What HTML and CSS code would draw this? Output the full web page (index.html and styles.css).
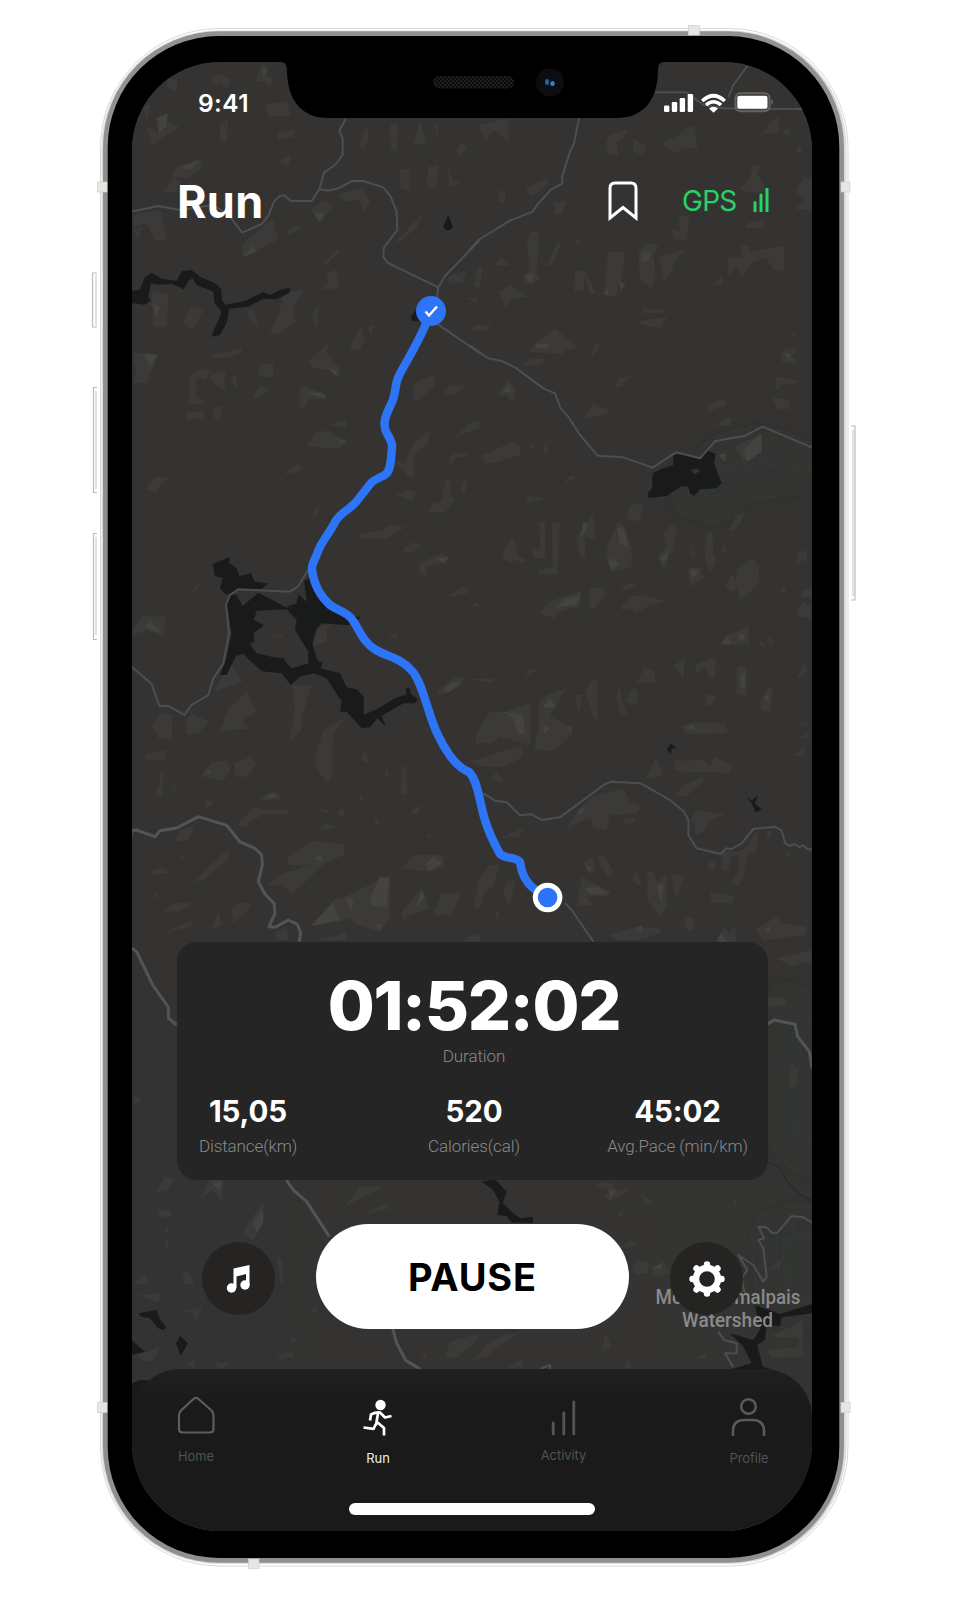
FILE: index.html
```html
<!DOCTYPE html>
<html lang="en">
<head>
<meta charset="utf-8">
<title>Run</title>
<link rel="stylesheet" href="styles.css">
</head>
<body>
<main class="stage">
  <svg class="frame" viewBox="0 0 956 1600" aria-hidden="true">
    <defs>
      <linearGradient id="rim" x1="0" x2="0" y1="0" y2="1"><stop offset="0" stop-color="#8f9193"/><stop offset="1" stop-color="#8f8f92"/></linearGradient>
    </defs>
    <g fill="#fdfdfd" stroke="#bcbcbc" stroke-width="1.2">
      <path d="M97 273h-4.500v54H97M97 387.500h-3.500v105H97M97 533.500h-3.500v106H97"/>
      <path d="M851 426h4v174h-4"/>
    </g>
    <path d="M96 275v50M96 391v98M96 537v98M853 430v166" stroke="#c6c6c6" stroke-width="1"/>
    <rect x="100.500" y="28.500" width="747.500" height="1537.500" rx="119" fill="#fff" stroke="#d8dada"/>
    <rect x="101.500" y="30.500" width="745" height="1533.500" rx="117" fill="#dcdede"/>
    <rect x="103" y="31.300" width="741" height="1531.500" rx="116" fill="url(#rim)"/>
    <rect x="107.700" y="36" width="731.600" height="1522" rx="111" fill="#000"/>
    <g fill="#e6e7e1" stroke="#cfd0ca" stroke-width=".7">
      <rect x="97.500" y="182" width="9.500" height="10"/><rect x="841" y="182" width="9" height="10"/>
      <rect x="97.500" y="1402.500" width="9.500" height="10"/><rect x="841" y="1402.500" width="9" height="10"/>
      <rect x="688.500" y="25.500" width="11" height="9.500"/><rect x="248.500" y="1559" width="10.500" height="9.500"/>
    </g>
  </svg>

  <section class="screen">
    <svg class="map" viewBox="132 62 680 1469" aria-hidden="true">
      <defs>
        <pattern id="mesh" width="4" height="4" patternUnits="userSpaceOnUse"><rect width="4" height="4" fill="#0b0b0b"/><circle cx="1" cy="1" r="1" fill="#242424"/><circle cx="3" cy="3" r="1" fill="#242424"/></pattern>
        <linearGradient id="cool" x1="0" x2="1"><stop offset="0" stop-color="#333334"/><stop offset=".55" stop-color="#353331"/><stop offset="1" stop-color="#333432"/></linearGradient>
        <linearGradient id="fade" x1="0" x2="0" y1="0" y2="1"><stop offset="0" stop-color="#fff" stop-opacity="0"/><stop offset="1" stop-color="#fff"/></linearGradient>
        <mask id="low"><rect x="132" y="940" width="680" height="200" fill="url(#fade)"/><rect x="132" y="1139" width="680" height="400" fill="#fff"/></mask>
        <filter id="soft" x="-30%" y="-30%" width="160%" height="160%"><feGaussianBlur stdDeviation="10"/></filter>
      </defs>
      <rect x="132" y="62" width="680" height="1469" fill="#353331"/>
      <rect x="132" y="940" width="680" height="591" fill="url(#cool)" mask="url(#low)"/>
      <g fill="#303430" filter="url(#soft)">
        <path d="M715 450L762 438L812 458V478L740 488L720 512L680 500Z"/>
        <path d="M780 990L812 1010V1170L782 1140Z"/>
        <path d="M765 1225L812 1215V1320L770 1310Z"/>
      </g>

      <!-- terrain facets -->
      <g class="facets">
        <g transform="translate(80 10) scale(.33333)">
          <path d="M388 208L415 192L454 208L440 236L422 220L405 228ZM530 200L545 160L565 172L560 195L582 208L570 230L548 215L528 212ZM556 282L620 275L632 315L565 322ZM260 205L292 210L290 245L262 232ZM190 290L212 280L200 330ZM225 325L265 310L262 335L298 350L215 405L200 350L235 370ZM418 340L444 330L442 395L422 398ZM592 370L640 358L642 380L595 390ZM590 458L635 432L625 468ZM290 470L360 448L368 470L325 505L275 500ZM245 550L280 505L300 510L290 545ZM835 410L862 345L868 380L850 420ZM930 345L955 340L950 425L932 415ZM1000 405L1020 330L1040 402ZM1062 340L1074 340L1072 390ZM1130 420L1145 395L1162 410L1140 440ZM960 480L990 478L988 545L962 535ZM1045 470L1075 465L1070 535L1040 530ZM1104 465L1118 510L1142 520L1108 530ZM690 600L735 570L762 588L720 635ZM770 555L850 530L870 575L850 605L840 570L800 575ZM160 612L240 600L262 692L222 690L200 640L160 650ZM490 700L580 625L592 690L485 745ZM620 660L655 645L662 655L628 675ZM935 710L1000 640L1032 605L1010 655ZM730 755L778 715L775 730L735 765ZM740 790L772 778L775 835L720 840L745 820ZM215 840L265 855L260 950L220 950ZM330 890L370 900L340 960L310 940ZM610 850L675 840L640 890L645 935L590 975L570 970L600 900ZM500 910L520 895L540 960L510 930ZM695 910L718 885L708 960ZM820 985L845 945L855 985L840 1020H810ZM860 950L882 945L875 980ZM1105 800L1160 780L1150 815L1105 822ZM1160 865L1195 860L1190 880ZM160 660L185 650L175 690Z"/>
          <path class="hi" d="M235 322L262 312L258 350L238 370ZM300 470L360 450L330 480ZM490 740L520 705L530 725ZM545 172L562 180L550 200ZM700 610L735 610L720 635ZM215 880L240 890L230 920Z"/>
        </g>
        <g transform="translate(470 10) scale(.33333)">
          <path d="M25 345L115 325V400L75 360L45 390ZM408 400L420 375L475 358L460 385L440 400L445 435L410 435ZM490 385L528 410L520 435L488 425ZM575 400L628 375L655 350H670L684 415L640 412L615 432ZM870 375L925 315V365ZM935 365L960 350L955 378ZM975 425L988 402L998 428ZM85 545L105 540V575L88 580ZM165 535L230 505L235 520L185 560ZM252 580L290 570L275 615L255 610ZM180 665L208 662L200 790L210 810L165 825L160 800L180 780L170 700ZM228 770L262 695L275 700L245 765ZM312 680L335 700H315ZM415 725L465 725L455 810L435 860L400 855ZM505 725L530 700L565 705L550 740L558 800L545 835L510 810ZM568 740L655 715L615 750L605 790L580 815ZM600 650L630 665L625 620L658 615L650 690L615 688ZM315 785L345 780L378 850L360 852L345 800L340 840L312 845ZM88 845L120 825L175 860L130 865L105 892ZM12 830L25 772H38L30 832ZM75 765L95 740L120 768ZM840 500L850 465L875 468L860 490L890 540L860 550L810 540ZM975 540L1005 500L1025 505V600L975 598L1000 570ZM830 640L885 628L880 655H825ZM775 745L815 740V705L840 708V725L942 708V785L910 780L890 745L845 758L820 800L795 770L775 800ZM730 830L755 795L760 820ZM10 945H60L55 962H10ZM200 1000L255 955L320 1010L300 1020H200ZM500 935L590 920L575 955L520 945ZM515 895L590 900L580 910H520ZM955 975L975 965V978Z"/>
          <path class="hi" d="M515 730L545 725L535 752L512 755ZM450 815L468 825L450 840ZM400 850L418 835L412 858ZM165 800L190 790L185 820Z"/>
        </g>
        <g transform="translate(80 340) scale(.33333)">
          <path d="M160 38L235 42L200 130H160L170 90L160 70ZM395 45L485 25V38L440 55L395 55ZM535 75L580 70V110L540 112ZM330 110L350 88L392 90L375 120L350 110L345 165L378 190L325 195ZM395 100L440 95L430 125L438 155L390 120ZM450 110L470 108V148ZM515 180L540 135L572 150ZM318 218L372 212L374 235L318 240ZM402 200L425 198L420 244L402 235ZM662 135L740 165L740 178L690 175L672 205L660 200ZM685 65L745 10L740 40L780 85L772 115L750 90L700 85ZM680 318L710 272L755 275L802 305L775 328ZM750 255L798 240V262ZM610 402L655 372L668 385L640 400ZM195 445L225 412L270 410L240 440L225 460ZM697 525L708 502L720 505L708 530ZM835 580L905 572L925 555L975 562L925 595L838 597ZM960 638L990 608L1030 612L1000 635ZM1015 672L1085 640L1112 655L1070 675L1040 680V705L1020 702ZM985 410L940 360L975 370L1000 310L1050 268L1045 310L1000 350L1005 410ZM1000 130L1065 105L1062 140L1025 175L1000 185ZM1088 160L1112 135L1160 138L1120 165ZM1125 290L1170 250L1200 240V265ZM1045 515L1060 490L1085 485L1095 420L1112 415L1110 465L1125 480L1095 518ZM1142 455L1148 425L1162 420L1155 460ZM948 465L985 448L1008 455L1000 482ZM1105 360L1122 340H1162L1158 352H1128L1112 378ZM1100 772L1150 740L1168 758ZM700 915L715 862L770 850L740 865V905ZM158 870L185 828L255 830L252 888L200 870L160 885ZM400 1055L450 970L488 1025L430 1045ZM445 1105L500 1055L530 1115L485 1145L510 1165L420 1175ZM215 1155L245 1115L278 1125L275 1200L235 1195ZM315 1150L335 1120L388 1145L355 1180L320 1185ZM635 1035H695L665 1135V1170L630 1205L645 1100ZM705 1255L730 1170L800 1130L760 1180L755 1255ZM1068 1060L1120 1015L1155 1010L1140 1040L1080 1068ZM200 1240L260 1245L255 1260H195ZM920 885L955 880L950 895ZM572 892L605 882L608 892ZM335 760L350 730L355 745Z"/>
          <path class="hi" d="M190 42L232 45L212 80ZM685 160L725 158L742 178ZM190 860L215 845L245 880ZM1070 655L1108 652L1090 670ZM1090 1048L1120 1025L1140 1030L1105 1058ZM770 298L800 302L785 312ZM745 85L770 90V110Z"/>
        </g>
        <g transform="translate(470 340) scale(.33333)">
          <path d="M178 35L200 5H298L280 42ZM160 80L180 55L228 58L215 72ZM360 60L375 10L390 15ZM80 165L115 120L138 150L128 188L108 165ZM435 142L445 115L485 108L465 125L455 142ZM342 238L368 190L415 208L412 222ZM930 50L945 25L980 28L965 48L988 70H940ZM920 110L985 120V130L935 135L915 155ZM902 172L958 180L955 208H925ZM712 200L745 180L772 182L765 198L712 214ZM742 255L775 232L788 238L778 258ZM38 345L130 305L150 315V345L75 370H42ZM175 310L190 315V332ZM218 340L228 292L234 342ZM280 435L300 408L320 412ZM165 490L175 468L228 478ZM470 515L485 492L520 495L510 542H475ZM97 635L130 590L145 650L170 660L160 668L130 660L118 668L98 650ZM208 545H225V655L190 655L185 622L210 630ZM245 550L270 545L262 700L208 705L205 690L248 682ZM318 590L345 560L370 518L375 600L345 590V655L328 650ZM410 620L445 545L465 560L485 630V680L425 695L408 650ZM565 650L590 620L580 575L605 555L620 565L610 630L592 655L585 695ZM655 685L690 680L700 715L658 740ZM708 580H728L730 645L742 660L720 698L705 660ZM665 600L675 645L665 650ZM755 635L762 610L770 635ZM775 570L800 525L822 518L815 545L790 570ZM765 740L790 700L798 730L800 690L850 655L868 680L865 735L810 780L800 745L785 755ZM975 670L985 635L1010 632L1012 660ZM930 765L938 738L950 752ZM980 810L1000 785L1022 800V835L990 830ZM990 770L1000 750L1025 745V775ZM210 820L235 785L335 752L330 800L280 810L250 835ZM358 745L405 742L402 770L368 810L358 805ZM452 800L485 768L545 770L588 785L540 795L500 818L480 805L455 810ZM448 755L475 728L500 738ZM750 912L770 885L800 875L835 855L838 915ZM862 892L890 920H875ZM895 885L910 902L900 915ZM500 1028L525 978L555 995V1028ZM612 978L645 950L640 1018ZM675 975L738 950L735 1018L715 1010L705 980L680 1000ZM800 980H830V1068L800 1060ZM978 1020L1005 965L1012 995ZM870 1085L900 1035L908 1060L900 1115L875 1110ZM18 1180L60 1115H105L180 1090V1215L90 1190L65 1210H18ZM205 1085L232 1065L290 1045L270 1075L240 1130L308 1160L305 1185L250 1232L192 1228L205 1170ZM345 1055L365 1020H382V1150L365 1115ZM315 1065H338L325 1130ZM450 1040L455 1075L472 1128L452 1120L438 1075ZM470 1085L485 1045L502 1048V1095ZM632 1160L665 1148H762L775 1180L650 1182ZM705 1062L740 1070L725 1095H708ZM165 1010L175 988L202 990ZM0 1018L72 1015L68 1028ZM980 1160L1000 1145L1012 1150ZM985 1195L1015 1180V1195ZM0 275L8 245L25 248ZM0 800L20 785L28 800ZM820 360L795 320L860 290L875 340Z"/>
          <path class="hi" d="M200 12L235 10V25L195 25ZM98 155L118 135L125 158ZM940 40L962 42L958 62ZM340 545L355 550L345 575L330 595ZM440 565L460 560L475 625L450 610ZM412 665L430 655L448 672L425 692ZM570 655L595 635L590 660L575 668ZM660 690L685 688L680 705L665 715ZM255 800L290 775L332 765L320 795L270 802ZM755 912L770 890L785 912ZM800 880L828 885L815 905ZM812 1000H825V1045L810 1040ZM880 1070L895 1060L895 1085ZM100 1115L160 1125L165 1180L145 1185L130 1135ZM220 1100L240 1072L258 1105ZM218 1150L240 1165L222 1182ZM285 1165L305 1160V1175ZM645 1165L665 1152L680 1168ZM820 330L875 280V335L830 365ZM745 345L768 340L765 365Z"/>
        </g>
        <g transform="translate(80 740) scale(.33333)">
          <path d="M220 35L258 30L255 45H235L225 65ZM362 108L395 65L440 62L452 90L430 122ZM462 72L510 50L532 70L500 112L465 108ZM235 98L252 100L248 170L222 168L240 130ZM278 135L290 150L280 155ZM705 60L725 0H755V110L740 130L710 85ZM845 60L852 28L868 70ZM965 80H980V165L962 160ZM915 105L920 82L930 110ZM535 182L570 155L605 162L600 178ZM470 258L520 200L560 210L625 208V222L550 225L520 238L495 260ZM375 175L402 188L378 208ZM710 270L735 252L782 265ZM718 205L760 215L735 220ZM775 208H792V230H775ZM880 235L900 240L888 262ZM990 222L1005 200H1022L1015 222ZM285 305L300 270L345 255L325 300ZM338 430L445 325V358L370 420ZM300 358L308 340L315 352ZM218 390L250 382L270 398L220 405ZM620 355L695 302L792 312V345L735 368L640 460L600 435H560L610 400L690 375L625 375ZM690 558L760 480L795 470L930 405V530L900 575L830 555L810 530L780 545L740 550ZM965 385L1000 345L1090 345V380L1050 395ZM965 515L1025 445L1050 505L990 525L968 550ZM1060 525L1085 458L1145 460L1115 525ZM250 515L280 490L330 488V500L290 515ZM395 568L415 515L425 555ZM455 510L480 488L515 490L495 520L458 550ZM255 578L325 545L345 555L290 570ZM700 600L760 590L800 575V602ZM585 575L620 562L625 600H590ZM1140 605L1180 582L1200 588V605ZM222 470L230 455L240 475ZM160 1065L190 1080L160 1092ZM1040 290L1048 278L1055 292ZM1060 145L1078 170L1072 172ZM835 180L845 160L850 182Z"/>
          <path class="hi" d="M370 105L390 85V100ZM548 178L575 160L595 168ZM1035 372L1060 350L1088 370L1050 392ZM695 558L760 485L778 540ZM795 470L822 480L812 515ZM870 475L900 410L928 415L920 500L875 498ZM705 360L722 340L730 362ZM885 555L905 550L900 575ZM1005 505L1025 450L1035 475Z"/>
        </g>
        <g transform="translate(470 740) scale(.33333)">
          <path d="M0 65L90 35L155 18L158 50L100 82L30 78ZM525 118L558 52L582 105ZM610 62L700 60L720 80L735 50L788 78L778 102L735 95H640L615 90ZM615 168L640 135L700 110V125L650 168ZM290 265L330 205L365 170L460 145L480 185L512 195L500 220L420 225L410 272L370 262L365 235L320 250ZM662 240L680 210L765 222L720 240L700 275L675 285V255ZM460 235H495V250H460ZM85 295L160 265L150 290ZM62 115L80 95L105 128ZM10 505L28 415L60 375H88L70 440L45 455L30 500ZM98 455L110 425L138 420L118 505ZM340 370L370 345L375 400L355 395ZM380 345L405 348L432 400L415 410L390 375ZM485 420L500 388L515 440ZM532 390L555 400L560 430L590 398V500L570 532L532 480ZM600 400L642 410L620 480ZM320 498L335 410L422 455L410 470L350 470L370 495ZM715 365H735V390H715ZM755 335L805 335L830 320L862 270L860 340H832L820 420L800 440L785 425L810 385L805 345L780 350L778 390L755 392ZM888 275L912 272L895 300ZM720 455L795 468L785 490L725 488ZM650 530L670 535L672 570L655 575L640 550ZM740 605L765 555L775 580L795 560L800 605ZM858 570L918 530L940 548L1010 560L1008 585L880 602ZM440 600L420 585L500 560L570 565V580L500 600ZM75 510L88 515L80 545ZM920 655L965 645L1025 630V665H1000L970 680ZM895 770L945 772L950 795L895 800ZM955 1040L962 975L985 985L978 1042ZM965 45L1005 25L1002 48ZM945 340L950 330L965 360Z"/>
          <path class="hi" d="M320 215L345 195L335 225ZM345 375L368 385L355 398ZM345 445L385 440L415 462L360 462ZM740 605L752 580L770 605ZM885 565L900 562V580ZM495 570L515 555L520 575ZM560 440L580 430L575 490Z"/>
        </g>
        <g transform="translate(80 1170) scale(.33333)">
          <path d="M225 68L255 22L282 25L265 60ZM365 85L385 30H430L425 90L395 60ZM230 122L270 118L278 135L240 145ZM485 190L550 95L548 160L520 212ZM255 170L272 175L258 190ZM250 205L268 210L260 248ZM795 110L840 50L920 48L850 80ZM855 132L920 98L930 115ZM308 312L325 300L345 345L312 340ZM175 375L240 370L235 400ZM160 340L195 315L210 345ZM310 425L370 410L345 455L340 430ZM595 555L640 545V560L610 562L602 578ZM690 438L712 400L708 425ZM175 555L240 530L218 575L190 572ZM315 590L340 565L345 590ZM400 575L450 582L420 600ZM1095 560L1110 515L1200 490L1190 510L1130 565ZM1015 570L1040 545V560ZM590 260L605 270L612 345L600 330ZM630 515L638 500L650 515Z"/>
          <path class="hi" d="M520 155L550 120V155L530 190ZM395 40L430 32L420 60Z"/>
        </g>
        <g transform="translate(470 1170) scale(.33333)">
          <path d="M375 40L430 38L425 60L395 55ZM400 75L478 55L450 80L415 95ZM512 70L545 95L530 102ZM790 85L802 92L795 105ZM445 128L465 122L450 142ZM445 235L480 212L515 225L480 230ZM482 290L505 270L540 278L530 310L498 312ZM545 290L580 275L600 310L550 320ZM670 180L698 185H670ZM395 555L405 485L425 530L405 540ZM462 595L475 562L488 592ZM10 570L60 515L105 495L155 485L100 520L50 560ZM110 595L160 565V590ZM900 500L1000 450V560L905 565L890 540L985 530V505ZM895 300L935 265L930 295ZM675 565L705 550L710 565Z"/>
          <path class="hi" d="M415 60L440 58L420 92ZM550 290L575 282V300Z"/>
        </g>
      </g>

      <!-- water -->
      <g class="water">
        <path transform="translate(80 10) scale(.33333)" d="M155 842L178 840L195 802L215 788L245 806L290 812L305 784L335 780L360 800L405 820L424 838L426 870L436 884L495 872L550 846L570 855L605 838L632 833L628 848L590 868L550 866L505 890L448 896L440 938L420 975L396 980L400 962L418 925L424 905L404 880L400 845L350 825L338 805L325 812L312 838L275 822L235 824L212 820L205 862L212 872L195 884L155 880ZM1105 616L1119 650L1112 660L1096 660L1090 648ZM1010 898L1045 890V935L998 933L992 920Z"/>
        <path transform="translate(80 340) scale(.33333)" fill-rule="evenodd" d="M398 672L450 650L448 668L470 685L478 708L512 700L525 725L564 730L545 748L480 746L440 765L420 745L428 715L404 708ZM452 762L470 765L488 798L535 758L615 800L655 808L615 802L650 790L655 762L680 785L672 722L690 715L740 795L810 828L845 832L805 856L725 850L708 868L697 912L712 960L728 968L722 985L780 1000L800 1042L830 1048L852 1072L850 1125L890 1108L945 1075L980 1063L978 1045L990 1045L992 1062L1014 1078L1005 1090L970 1090L905 1128L918 1160L892 1135L870 1162L845 1165L800 1115L780 1115L785 1085L740 1015L700 1000L660 1010L632 1035L605 1000L545 994L490 942L468 948L440 1005H420L438 960L455 880L440 790ZM530 812L522 840L552 856L520 880L524 905L510 912L530 940L575 950L610 955L620 970L635 985L685 970V935L645 870L650 840L620 808Z"/>
        <path transform="translate(470 340) scale(.33333)" fill-rule="evenodd" d="M534 460L546 443L548 400L580 385L610 375V345L640 342L690 358L710 330L736 342L732 370L755 430L740 445L690 448L672 468L660 460L655 440L635 438L590 468L536 474ZM663 390L680 385L692 394L672 402ZM603 1210L619 1225L605 1225L603 1243L590 1228Z"/>
        <path transform="translate(470 740) scale(.33333)" d="M830 170L845 182L864 165L855 190L876 209L857 217L846 193Z"/>
        <path transform="translate(80 1170) scale(.33333)" d="M175 430L230 420L238 445L258 472L250 480L235 475L210 445L185 440ZM300 497L324 520L302 558L288 520ZM155 510L195 545L155 555ZM155 640L180 630L225 632V800H155Z"/>
        <path transform="translate(470 1170) scale(.33333)" d="M35 35L75 28L110 65L98 100L125 125L150 145L188 140L190 158H125L110 138L82 135L88 95L70 60ZM855 405L930 432L1027 402V430L935 442L930 468L890 465L885 510L862 525L878 590L905 597H785L845 580L820 530L780 490L850 510L870 480Z"/>
      </g>

      <!-- roads -->
      <g class="roads">
        <path transform="translate(80 10) scale(.33333)" d="M155 605L235 588L300 600L400 585L450 620L486 668L545 642L565 618L582 575L600 557H615L632 573H695L718 538L732 488L765 465L788 435V385L778 362L798 325M718 538L745 542L780 533L815 513H850L910 532L932 560L950 605L952 660L912 712L910 740L922 758L1075 832L1095 798L1200 690M1075 832L1070 870M1070 940L1200 1030"/>
        <path transform="translate(470 10) scale(.33333)" d="M-2 720L25 690L120 632L188 605L205 580L242 540L278 520L276 500L300 425L312 400L327 325M555 247H650L700 285L760 295L1000 297M832 168L790 225L775 262"/>
        <path transform="translate(470 340) scale(.33333)" d="M-2 15L55 55L95 63L135 82L220 145L255 160L272 205L295 230L330 285L383 347L460 352L548 383L618 337L690 355L736 303L825 287L878 260L1025 322"/>
        <path transform="translate(80 340) scale(.33333)" d="M155 980L215 1032L238 1098H265L313 1125L335 1095L385 1065L400 1015L430 970L447 880L438 795L450 765L475 748L628 755L652 742L685 690"/>
        <g class="major">
          <path transform="translate(80 740) scale(.33333)" d="M155 285V272L168 270L225 290L240 272L290 264L355 230L440 256L480 306L525 325L545 345L547 375L535 425L555 462L582 490L585 520L567 560L585 562L625 540L652 553L662 580L658 605M155 625L170 635L218 735L264 800L266 835L290 855"/>
          <path transform="translate(470 740) scale(.33333)" d="M893 852L912 840L975 853L983 890L1018 935L1026 985"/>
          <path transform="translate(80 1170) scale(.33333)" d="M618 28L640 60L680 95L748 200M938 475L950 520L978 572L1022 598"/>
        </g>
        <path transform="translate(470 740) scale(.33333)" d="M40 160L75 182L110 187L150 226L185 223L215 240L270 232L405 132L425 125L512 130L600 180L642 215L655 240V285L680 325L752 342L768 325L785 327L815 310L850 267L915 260L935 272L945 308L958 318L975 312L988 322L998 316L1015 328H1027M285 490L305 510L370 605"/>
        <path transform="translate(470 1170) scale(.33333)" d="M1027 158L1000 142L965 138L920 190L905 188L890 172L865 170L882 205L865 210L880 235L890 320L880 335L850 285L805 255L832 300L815 325L825 375M745 485L762 510L800 520V550L765 550L790 592M210 597L240 585V597"/>
        <path class="boundary" transform="translate(470 1170) scale(.33333)" d="M893 -22L925 -12L950 30Q980 75 1027 92"/>
      </g>

      <!-- tracked route -->
      <path class="route" d="M431 312C424 330 415 347 407 361C393 385 398 380 394 396C392 406 382 417 385 428C386 435 393 440 392 448C391 457 391 470 386 474C381 478 376 478 371 483L356 502C349 510 340 513 335 522C330 533 321 541 317 554C315 560 311 565 312 570C314 585 321 597 330 605C340 612 348 612 354 622C360 632 364 643 376 650C388 657 402 658 413 672C424 686 428 716 438 735C446 752 456 767 469 772C478 780 480 805 485 820C489 834 495 845 500 854C505 859 516 857 520 862C521 870 523 880 533 888L548 898"/>
      <circle cx="431" cy="311" r="15" fill="#2e74f6"/>
      <path d="M425.500 311.500L429 315.500L437 306.500" fill="none" stroke="#fff" stroke-width="2.400"/>
      <circle cx="547.600" cy="897.500" r="12.300" fill="#2e74f6" stroke="#fff" stroke-width="5"/>

      <g class="place" text-anchor="middle">
        <text x="728" y="1304" textLength="145" lengthAdjust="spacingAndGlyphs">Mount Tamalpais</text>
        <text x="727.500" y="1327" textLength="91" lengthAdjust="spacingAndGlyphs">Watershed</text>
      </g>

      <!-- notch -->
      <path d="M280 62C286 62 287 65 287 72C288 103 304 118 328 118H617C641 118 657 103 658 72C658 65 659 62 665 62Z" fill="#000"/>
      <rect x="433" y="76" width="81" height="12.500" rx="6.200" fill="url(#mesh)"/>
      <circle cx="550" cy="82.500" r="14" fill="#0d0d0f"/><circle cx="550" cy="82.500" r="7.500" fill="#07101c"/>
      <ellipse cx="547" cy="82" rx="2" ry="3" fill="#2b5f96"/><ellipse cx="552.500" cy="83.500" rx="2.200" ry="2.600" fill="#3b82c4"/>
    </svg>

    <div class="content">
      <div class="status">
        <span class="clock">9:41</span>
        <svg class="status-icons" viewBox="664 90 112 26" width="112" height="26" aria-label="Signal, Wi-Fi and battery">
          <g fill="#fff">
            <rect x="664" y="105.500" width="5.400" height="6.500" rx="1.300"/><rect x="671.800" y="102" width="5.400" height="10" rx="1.300"/><rect x="679.700" y="98" width="5.400" height="14" rx="1.300"/><rect x="687.700" y="94" width="5.400" height="18" rx="1.300"/>
            <path d="M709 108.500Q713.500 105.200 718 108.500L713.500 112.800Z"/>
          </g>
          <path d="M702.200 101Q713.500 90.500 724.800 101M706 105Q713.500 98.500 721 105" fill="none" stroke="#fff" stroke-width="3.600"/>
          <rect x="735.500" y="93.200" width="34" height="18" rx="5" fill="none" stroke="#646362" stroke-width="2"/>
          <rect x="737.300" y="95.700" width="30.200" height="13" rx="2" fill="#fff"/>
          <path d="M771.500 99Q774.500 102 771.500 105Z" fill="#6b6a69"/>
        </svg>
      </div>

      <header class="header">
        <h1>Run</h1>
        <svg class="bookmark" viewBox="0 0 30 40" width="30" height="40" aria-label="Bookmark"><path d="M2 37V7Q2 2 7 2H23Q28 2 28 7V37L15 26.500Z" fill="none" stroke="#fff" stroke-width="3"/></svg>
        <span class="gps">GPS</span>
        <svg class="gps-bars" viewBox="0 0 16 24" width="16" height="24" aria-hidden="true"><path d="M2 14.500V23M8 7V23M14 1V23" stroke="#25d366" stroke-width="3" stroke-linecap="round"/></svg>
      </header>

      <section class="card">
        <div class="time">01:52:02</div>
        <div class="label">Duration</div>
        <div class="stats">
          <div class="stat"><b>15,05</b><span class="label">Distance(km)</span></div>
          <div class="stat"><b>520</b><span class="label">Calories(cal)</span></div>
          <div class="stat"><b>45:02</b><span class="label">Avg.Pace (min/km)</span></div>
        </div>
      </section>

      <div class="controls">
        <button class="round" aria-label="Music"><svg viewBox="226 1263 25 30" width="25" height="30"><path d="M233.500 1267.500L249.500 1264V1284H246V1273L236.500 1275.500V1287H233.500Z" fill="#fff"/><circle cx="231.500" cy="1287" r="4.700" fill="#fff"/><circle cx="245" cy="1284" r="4.700" fill="#fff"/></svg></button>
        <button class="pause">PAUSE</button>
        <button class="round" aria-label="Settings"><svg viewBox="-18 -18 36 36" width="36" height="36"><circle r="11" fill="none" stroke="#fff" stroke-width="6.400"/><path d="M0-13.500V-14.500M0 13.500V14.500M-13.500 0H-14.500M13.500 0H14.500M-9.700-9.700L-10.500-10.500M9.700 9.700L10.500 10.500M-9.700 9.700L-10.500 10.500M9.700-9.700L10.500-10.500" stroke="#fff" stroke-width="6.400" stroke-linecap="round"/></svg></button>
      </div>

      <footer class="tabbar">
        <nav>
          <a class="tab"><svg viewBox="177 1396 38 42" width="38" height="42"><path d="M179 1415.500Q179 1412.500 181 1410.500L193.500 1399Q196 1396.800 198.500 1399L211.500 1410.500Q213.500 1412.500 213.500 1415.500V1429Q213.500 1432.500 210 1432.500H182.500Q179 1432.500 179 1429Z" fill="none" stroke="#5d5d5d" stroke-width="2.200"/></svg><span>Home</span></a>
          <a class="tab active"><svg viewBox="358.500 1396 38 42" width="38" height="42"><circle cx="380" cy="1405" r="5.200" fill="#fff"/><path d="M369.500 1420.500L370.500 1414.500Q375 1412 379.500 1412.500L384.500 1417.500L391 1416M377.500 1413.500L375.500 1425M363 1427.500L373 1428.800L376.500 1422L383.500 1428V1435.500" fill="none" stroke="#fff" stroke-width="2.700" stroke-linejoin="round"/></svg><span>Run</span></a>
          <a class="tab"><svg viewBox="545.500 1396 38 42" width="38" height="42"><path d="M553.700 1423V1434M564.300 1413V1434M574.300 1402V1434" stroke="#555" stroke-width="2.800" stroke-linecap="round"/></svg><span>Activity</span></a>
          <a class="tab"><svg viewBox="730.500 1396 38 42" width="38" height="42"><g fill="none" stroke="#5a5a5a" stroke-width="2.600"><circle cx="749" cy="1406.500" r="7.300"/><path d="M733.500 1436V1431Q733.500 1420 745 1420H753Q764.500 1420 764.500 1431V1436"/></g></svg><span>Profile</span></a>
        </nav>
        <div class="home-indicator"></div>
      </footer>
    </div>
  </section>
</main>
</body>
</html>
```
FILE: styles.css
```css
* { box-sizing: border-box; }
body { margin: 0; background: #fff; }
.stage { position: relative; width: 956px; height: 1600px; padding: 62px 0 0 132px; overflow: hidden; }
.frame { position: absolute; inset: 0; width: 956px; height: 1600px; }
.screen { position: relative; width: 680px; height: 1469px; border-radius: 88px; overflow: hidden; background: #353331; color: #fff; font-family: Inter, "Liberation Sans", sans-serif; }
.map { position: absolute; inset: 0; width: 680px; height: 1469px; }
.facets { fill: #3b3a38; }
.facets .hi { fill: #444341; }
.water { fill: #191b1a; }
.roads { fill: none; stroke: #4c4e51; stroke-width: 6; stroke-linejoin: round; }
.roads .major { stroke: #535456; stroke-width: 9; }
.roads .boundary { stroke: #292929; stroke-width: 4; }
.route { fill: none; stroke: #2e74f6; stroke-width: 8.4; stroke-linejoin: round; stroke-linecap: round; }
.place { font: 500 20px Roboto, "Liberation Sans", sans-serif; fill: #8a8a8a; }

.content { position: relative; display: flex; flex-direction: column; height: 100%; }
.status { display: flex; justify-content: space-between; height: 54px; margin-top: 28px; padding: 0 36px 0 66px; }
.clock { font-size: 24.5px; font-weight: 600; line-height: 27px; letter-spacing: .4px; }
.header { display: flex; align-items: flex-start; height: 60px; padding: 0 43px 0 45px; margin-top: 37px; }
h1 { margin: 0; font-size: 45px; font-weight: 700; line-height: 41px; letter-spacing: .3px; flex: 1; }
.gps { width: 56px; margin-left: 44px; font-size: 28px; line-height: 40px; color: #25d366; letter-spacing: -.7px; }
.gps-bars { margin: 7px 0 0 15px; }

.card { height: 238px; margin: 701px 44px 0 45px; border-radius: 20px; background: #252525; padding-top: 29px; text-align: center; font-family: Roboto, "Liberation Sans", sans-serif; }
.time { font: 800 68px/68px Inter, "Liberation Sans", sans-serif; letter-spacing: -1.3px; padding-left: 3px; }
.label { font-size: 17px; line-height: 22px; font-weight: 300; color: #8a8a8a; letter-spacing: -.1px; }
.card > .label { margin-top: 6px; padding-left: 3px; }
.stats { display: grid; grid-template-columns: 226px 185px 153px; margin-top: 28px; padding-left: 13px; }
.stat { display: flex; flex-direction: column; align-items: center; width: 116px; }
.stat:last-child { width: 153px; }
.stat b { font: 700 29.5px/32px Inter, "Liberation Sans", sans-serif; letter-spacing: -.1px; }
.stat .label { margin-top: 8px; white-space: nowrap; }

.controls { display: flex; align-items: center; justify-content: space-between; margin-top: 44px; padding: 0 69px 0 70px; }
button { border: 0; padding: 0; font-family: inherit; }
.round { display: grid; place-items: center; width: 73px; height: 73px; margin-top: 4px; border-radius: 50%; background: #252422; }
.pause { width: 313px; height: 105px; border-radius: 53px; background: #fff; color: #000; font-size: 38px; font-weight: 700; letter-spacing: .8px; }

.tabbar { height: 162px; margin-top: auto; border-radius: 48px 48px 0 0; background: linear-gradient(#202020, #1a1a1a 35px); padding: 27px 0 0 34px; }
nav { display: grid; grid-template-columns: 182px 185.5px 185.5px 60px; height: 107px; }
.tab { display: flex; flex-direction: column; align-items: center; width: 60px; font-size: 12.9px; line-height: 16px; color: #525252; }
.tab svg { flex: none; }
.tab span { margin-top: 11px; }
.tab:nth-child(even) span { margin-top: 12.5px; }
.tab:nth-child(3) span { margin-top: 10px; }
.tab.active { color: #eee; }
.home-indicator { width: 246px; height: 12px; margin-left: 183px; border-radius: 6px; background: #fff; }
```
